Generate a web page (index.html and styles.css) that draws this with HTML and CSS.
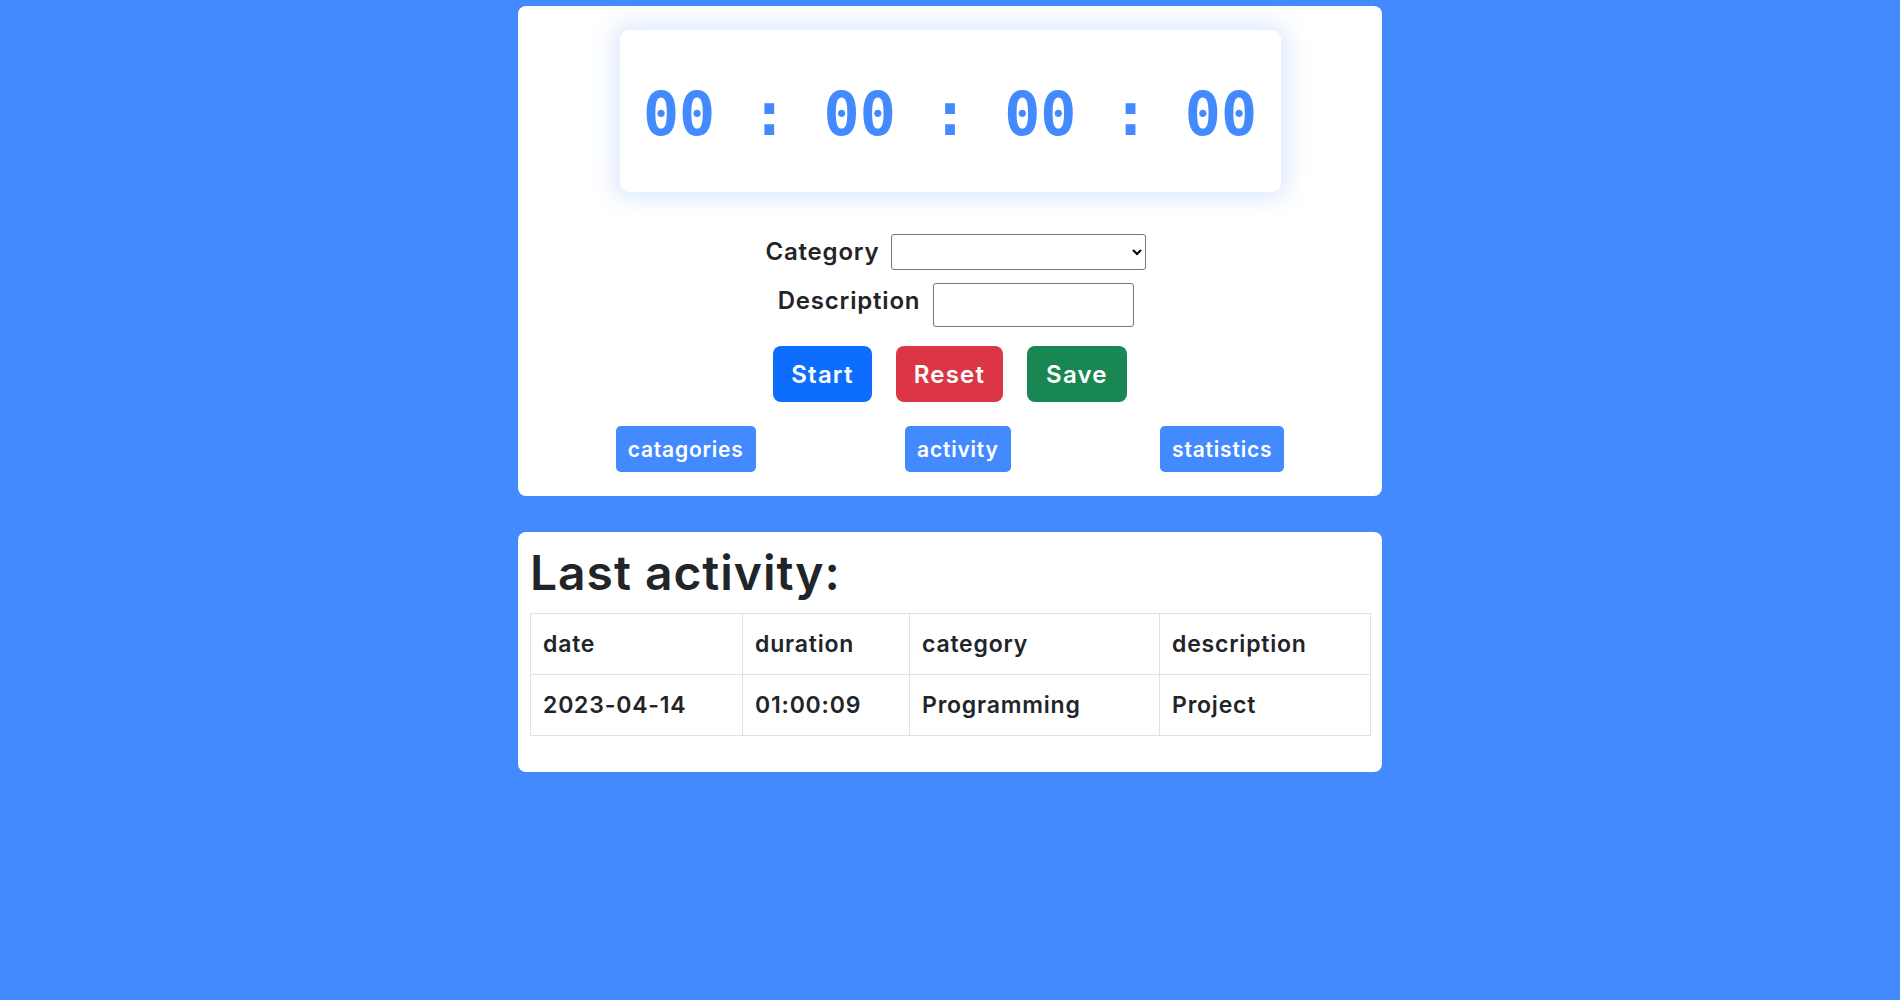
FILE: index.html
```html
<!DOCTYPE html>
<html lang="en">
<head>
<meta charset="utf-8">
<title>Time tracker</title>
<link rel="stylesheet" href="styles.css">
</head>
<body>
<main class="page">
  <section class="card card-timer">
    <div class="timer">00 : 00 : 00 : 00</div>
    <div class="form-row row-category">
      <label class="form-label" for="category">Category</label>
      <select id="category" class="select"></select>
    </div>
    <div class="form-row row-description">
      <label class="form-label" for="description">Description</label>
      <input id="description" class="text-input" type="text">
    </div>
    <div class="actions">
      <button class="btn btn-start">Start</button>
      <button class="btn btn-reset">Reset</button>
      <button class="btn btn-save">Save</button>
    </div>
    <nav class="nav">
      <a class="nav-btn" href="#">catagories</a>
      <a class="nav-btn" href="#">activity</a>
      <a class="nav-btn" href="#">statistics</a>
    </nav>
  </section>

  <section class="card card-last">
    <h1 class="title">Last activity:</h1>
    <table class="activity-table">
      <colgroup>
        <col class="c-date">
        <col class="c-duration">
        <col class="c-category">
        <col class="c-description">
      </colgroup>
      <thead>
        <tr><th>date</th><th>duration</th><th>category</th><th>description</th></tr>
      </thead>
      <tbody>
        <tr><td>2023-04-14</td><td>01:00:09</td><td>Programming</td><td>Project</td></tr>
      </tbody>
    </table>
  </section>
</main>
</body>
</html>
```

FILE: styles.css
```css
* { box-sizing: border-box; }

html, body {
  margin: 0;
  padding: 0;
  background: #448aff;
}

body {
  font-family: "Inter", "Open Sans", "DejaVu Sans", sans-serif;
  font-weight: 600;
  color: #212529;
  letter-spacing: 0.05em;
}

.page {
  display: flex;
  flex-direction: column;
  align-items: center;
  gap: 36px;
  padding-top: 6px;
}

.card {
  width: 864px;
  background: #ffffff;
  border-radius: 8px;
}

.card-timer {
  display: flex;
  flex-direction: column;
  align-items: center;
  padding: 24px 0 24px;
}

.timer {
  width: 661px;
  height: 162px;
  border-radius: 9px;
  background: #ffffff;
  box-shadow: 0 0 22px 7px rgba(68, 138, 255, 0.18);
  display: flex;
  align-items: center;
  justify-content: center;
  padding-top: 5px;
  font-family: "DejaVu Sans Mono", monospace;
  font-weight: 700;
  font-size: 60px;
  letter-spacing: 0;
  color: #448aff;
  white-space: pre;
}

.form-row {
  display: flex;
  justify-content: center;
  align-items: flex-start;
  padding-left: 12px;
}

.row-category {
  margin-top: 42px;
  gap: 12px;
}

.row-description {
  margin-top: 13px;
  gap: 13px;
}

.form-label {
  font-size: 24px;
  line-height: 36px;
}

.select {
  width: 255px;
  height: 36px;
  font-size: 16px;
  border: 1px solid #767676;
  border-radius: 3px;
  background: #ffffff;
}

.text-input {
  width: 201px;
  height: 44px;
  font-size: 16px;
  border: 1px solid #767676;
  border-radius: 3px;
  background: #ffffff;
}

.actions {
  display: flex;
  gap: 24px;
  margin-top: 19px;
}

.btn {
  height: 56px;
  padding: 0 18px;
  border: none;
  border-radius: 8px;
  color: #ffffff;
  font-family: inherit;
  font-weight: 600;
  font-size: 24px;
  letter-spacing: 0.05em;
}

.btn-start { background: #0d6efd; }
.btn-reset { background: #dc3545; }
.btn-save { background: #198754; padding: 0 19px; }

.nav {
  align-self: stretch;
  display: flex;
  justify-content: space-around;
  padding: 0 23px;
  margin-top: 24px;
}

.nav-btn {
  display: flex;
  align-items: center;
  height: 46px;
  padding: 0 12px;
  border-radius: 5px;
  background: #448aff;
  color: #ffffff;
  font-size: 21px;
  text-decoration: none;
}

.card-last {
  padding: 12px 12px 12px;
}

.title {
  margin: 0 0 11px;
  font-size: 48px;
  font-weight: 600;
  line-height: 1.2;
  letter-spacing: 0.02em;
}

.activity-table {
  width: 100%;
  table-layout: fixed;
  border-collapse: collapse;
  margin-bottom: 24px;
  font-size: 23px;
}

.c-date { width: 212px; }
.c-duration { width: 167px; }
.c-category { width: 250px; }
.c-description { width: 211px; }

.activity-table th,
.activity-table td {
  border: 1px solid #dee2e6;
  padding: 12px 12px;
  line-height: 36px;
  text-align: left;
  font-weight: 600;
}
```
